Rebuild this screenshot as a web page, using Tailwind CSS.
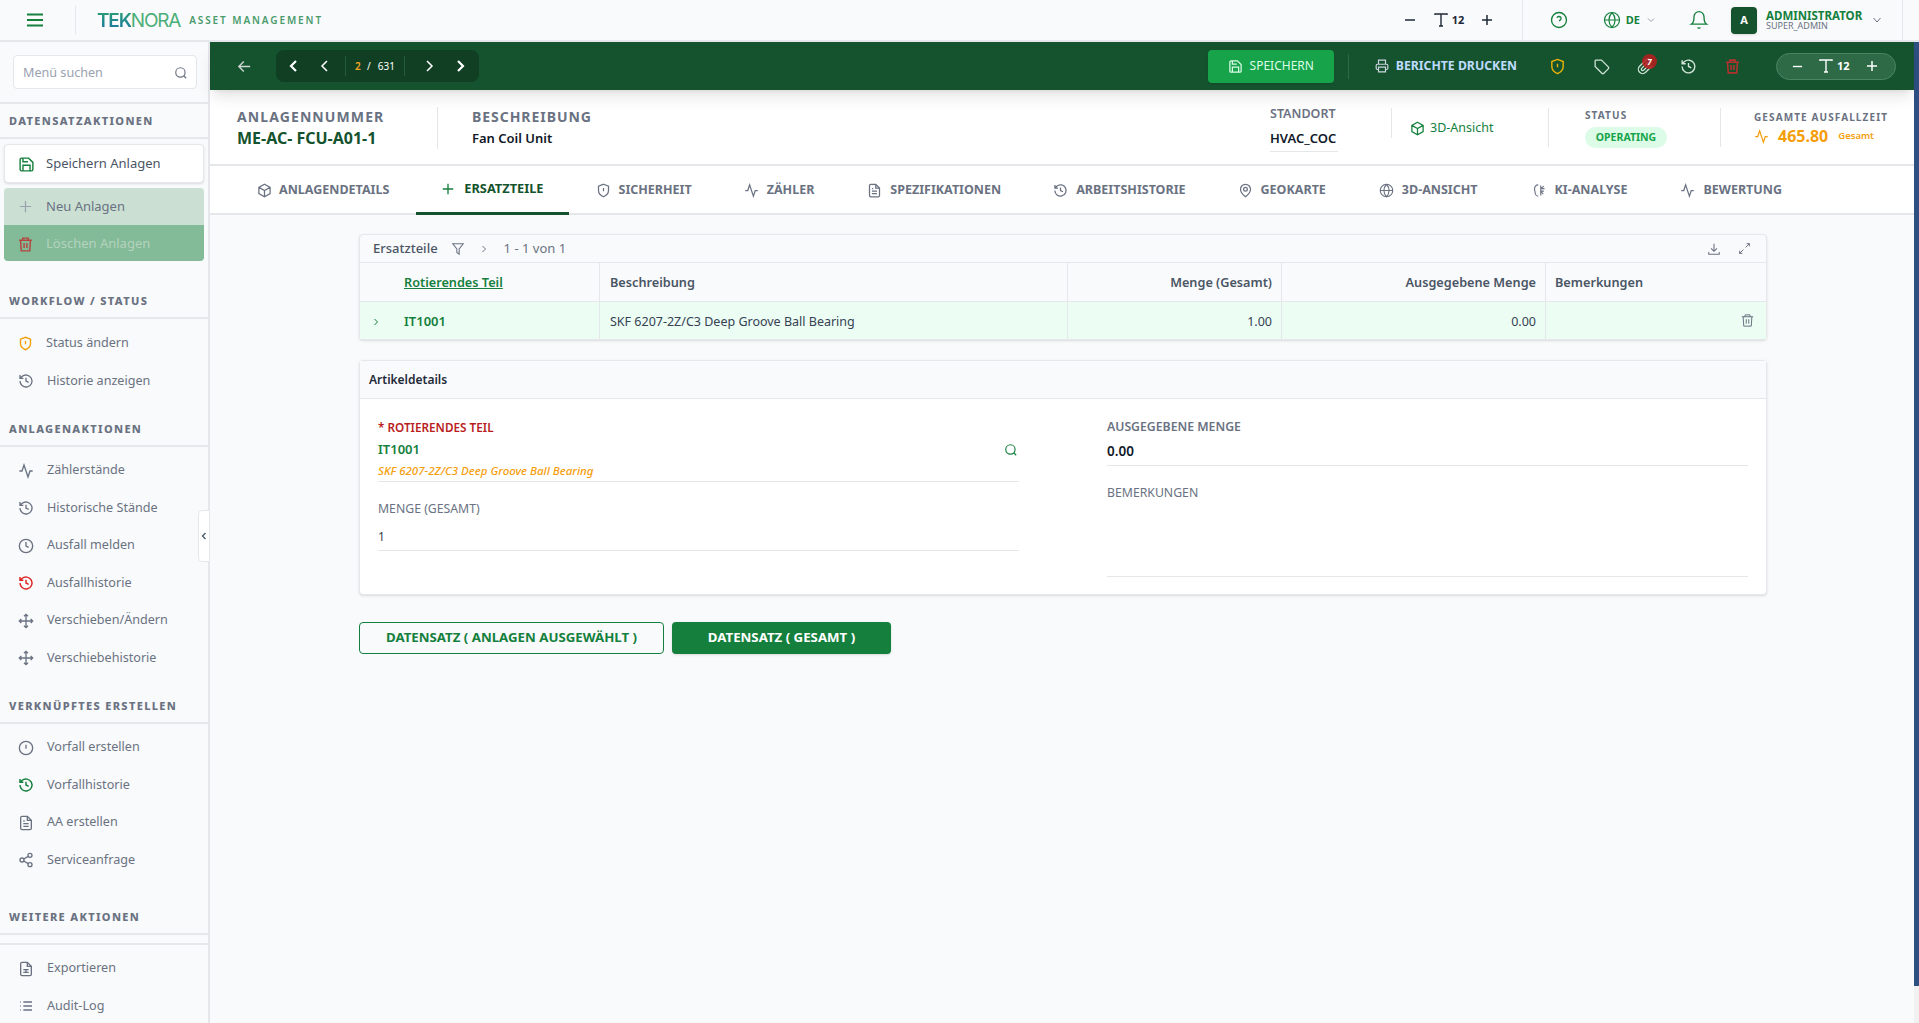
<!DOCTYPE html>
<html lang="de">
<head>
  <meta charset="UTF-8">
  <meta name="viewport" content="width=device-width, initial-scale=1.0">
  <title>Teknora Asset Management</title>
  <script src="https://cdn.jsdelivr.net/npm/@tailwindcss/browser@4"></script>
</head>
<body class="bg-[#f8fafc] h-[1023px] w-[1919px] overflow-hidden flex flex-col font-['Noto_Sans',sans-serif] text-[13px] text-gray-500">

  <!-- top header -->
  <header class="h-[42px] shrink-0 bg-[#f9fafb] border-b-2 border-gray-200 flex items-center pl-[26px]">
    <svg class="w-[18px] h-[18px] text-[#15803d]" viewBox="0 0 18 18" fill="none" stroke="currentColor" stroke-width="2"><path d="M1 3.5h16M1 9h16M1 14.5h16"/></svg>
    <div class="w-px h-[28px] bg-gray-200 ml-[31px]"></div>
    <div class="ml-[21px] flex items-center">
      <span class="text-[19px] leading-none font-['Inter',sans-serif] tracking-[-1.2px]"><span class="bg-gradient-to-b from-[#2fa36b] to-[#1d6fa5] bg-clip-text text-transparent font-semibold">TEK</span><span class="text-[#4caf78]">NORA</span></span>
      <span class="ml-[9px] text-[10px] font-semibold tracking-[1.9px] text-[#4a9a6c]">ASSET MANAGEMENT</span>
    </div>
    <div class="ml-auto flex items-center h-full text-gray-800">
      <svg class="w-[12px] h-[12px]" viewBox="0 0 12 12" stroke="currentColor" stroke-width="1.5"><path d="M1 6h10"/></svg>
      <svg class="w-[16px] h-[16px] ml-[17px]" viewBox="0 0 16 16" fill="none" stroke="currentColor" stroke-width="1.4"><path d="M2 3V2h12v1M8 2v12M6 14h4"/></svg>
      <span class="text-[11px] font-bold ml-[3px] w-[14px]">12</span>
      <svg class="w-[12px] h-[12px] ml-[15px]" viewBox="0 0 12 12" stroke="currentColor" stroke-width="1.5"><path d="M1 6h10M6 1v10"/></svg>
      <div class="w-px h-full bg-gray-200 ml-[29px]"></div>
      <svg class="w-[18px] h-[18px] ml-[27px] text-[#15803d]" viewBox="0 0 24 24" fill="none" stroke="currentColor" stroke-width="1.8"><circle cx="12" cy="12" r="10"/><path d="M9.2 9a3 3 0 0 1 5.7 1c0 2-3 3-3 3M12 17h.01"/></svg>
      <svg class="w-[18px] h-[18px] ml-[35px] text-[#15803d]" viewBox="0 0 24 24" fill="none" stroke="currentColor" stroke-width="1.6"><circle cx="12" cy="12" r="10"/><path d="M2 12h20M12 2c5.500 6 5.500 14 0 20c-5.500-6-5.500-14 0-20"/></svg>
      <span class="text-[11px] font-bold text-[#15803d] ml-[5px]">DE</span>
      <svg class="w-[10px] h-[10px] ml-[6px] text-gray-400" viewBox="0 0 10 10" fill="none" stroke="currentColor" stroke-width="1"><path d="M2 3.500l3 3 3-3"/></svg>
      <svg class="w-[20px] h-[20px] ml-[33px] text-[#15803d]" viewBox="0 0 24 24" fill="none" stroke="currentColor" stroke-width="1.6"><path d="M6 8a6 6 0 0 1 12 0c0 7 3 9 3 9H3s3-2 3-9M10.300 21a2 2 0 0 0 3.400 0"/></svg>
      <div class="w-[26px] h-[27px] ml-[22px] bg-[#14532d] rounded-sm text-white text-[11px] font-bold flex items-center justify-center shadow">A</div>
      <div class="ml-[9px] w-[100px] flex flex-col">
        <span class="text-[11.500px] leading-[10px] font-bold text-[#15803d]">ADMINISTRATOR</span>
        <span class="text-[9px] leading-[9px] text-gray-500">SUPER_ADMIN</span>
      </div>
      <svg class="w-[10px] h-[10px] ml-[6px] text-gray-500" viewBox="0 0 10 10" fill="none" stroke="currentColor" stroke-width="1"><path d="M1.500 3l3.500 4 3.500-4"/></svg>
      <div class="w-px h-full bg-gray-200 ml-[20px]"></div>
      <div class="w-[16px]"></div>
    </div>
  </header>

  <div class="flex-1 flex min-h-0">
    <!-- sidebar -->
    <aside class="relative w-[210px] shrink-0 bg-[#f9fafb] border-r-2 border-gray-200 flex flex-col text-[12.600px]">
      <div class="h-[62px] shrink-0 border-b-2 border-gray-200 pl-[13px] pr-[11px] pt-[13px]">
        <div class="h-[34px] bg-white border border-gray-200 rounded-sm flex items-center justify-between pl-[9px] pr-[8px] pt-[2px] text-gray-400">
          <span>Menü suchen</span>
          <svg class="w-[14px] h-[14px] text-gray-500" viewBox="0 0 24 24" fill="none" stroke="currentColor" stroke-width="2"><circle cx="11" cy="11" r="8"/><path d="M21 21l-4.300-4.300"/></svg>
        </div>
      </div>

      <div class="h-[35px] shrink-0 border-b-2 border-gray-200 pl-[9px] pt-[2px] flex items-center text-[11px] font-extrabold tracking-[1.35px] text-gray-500">DATENSATZAKTIONEN</div>
      <div class="px-[4px] pt-[5px] flex flex-col text-[13px]">
        <div class="h-[39px] pt-[1px] bg-white border border-gray-200 rounded-sm shadow-sm flex items-center pl-[13px] gap-[11px] text-gray-600">
          <svg class="w-[17px] h-[17px] text-[#15803d]" viewBox="0 0 24 24" fill="none" stroke="currentColor" stroke-width="2"><path d="M15 3H5a2 2 0 0 0-2 2v14a2 2 0 0 0 2 2h14a2 2 0 0 0 2-2V9zM7 21v-8h10v8M7 3v5h7"/></svg>
          <span>Speichern Anlagen</span>
        </div>
        <div class="mt-[5px] h-[37px] bg-[#cbe0d3] rounded-t-sm flex items-center pl-[14px] gap-[13px] text-gray-500">
          <svg class="w-[15px] h-[15px] text-gray-400" viewBox="0 0 16 16" stroke="currentColor" stroke-width="1.3"><path d="M2 8h12M8 2v12"/></svg>
          <span>Neu Anlagen</span>
        </div>
        <div class="h-[36px] pt-[2px] bg-[#83ba97] rounded-b-sm flex items-center pl-[13px] gap-[12px] text-[#b4d3bf]">
          <svg class="w-[17px] h-[17px] text-[#b4453f]" viewBox="0 0 24 24" fill="none" stroke="currentColor" stroke-width="2"><path d="M3 6h18M8 6V3h8v3M5 6l1 15h12l1-15M10 10v7M14 10v7"/></svg>
          <span>Löschen Anlagen</span>
        </div>
      </div>

      <div class="mt-[23px] h-[35px] shrink-0 border-b-2 border-gray-200 pl-[9px] pt-[2px] flex items-center text-[11px] font-extrabold tracking-[1.35px] text-gray-500">WORKFLOW / STATUS</div>
      <div class="pt-[6px] flex flex-col">
        <div class="h-[37.5px] flex items-center pl-[18px] gap-[13px] text-gray-500">
          <svg class="w-[15px] h-[15px] text-[#f59e0b]" viewBox="0 0 24 24" fill="none" stroke="currentColor" stroke-width="2.200"><path d="M12 2l8 3v7c0 5-3.500 8-8 10c-4.500-2-8-5-8-10V5zM12 8v5M12 16h.01"/></svg>
          <span>Status ändern</span>
        </div>
        <div class="h-[37.5px] flex items-center pl-[18px] gap-[13px] text-gray-500">
          <svg class="w-[16px] h-[16px] text-gray-500" viewBox="0 0 24 24" fill="none" stroke="currentColor" stroke-width="2"><path d="M3 12a9 9 0 1 0 3-6.700L3 8M3 3v5h5M12 7v5l4 2"/></svg>
          <span>Historie anzeigen</span>
        </div>
      </div>

      <div class="mt-[12px] h-[35px] shrink-0 border-b-2 border-gray-200 pl-[9px] pt-[2px] flex items-center text-[11px] font-extrabold tracking-[1.35px] text-gray-500">ANLAGENAKTIONEN</div>
      <div class="pt-[5px] flex flex-col">
        <div class="h-[37.5px] flex items-center pl-[18px] gap-[13px]">
          <svg class="w-[16px] h-[16px]" viewBox="0 0 24 24" fill="none" stroke="currentColor" stroke-width="2"><path d="M2 12h4l3-9 6 18 3-9h4"/></svg>
          <span>Zählerstände</span>
        </div>
        <div class="h-[37.5px] flex items-center pl-[18px] gap-[13px]">
          <svg class="w-[16px] h-[16px]" viewBox="0 0 24 24" fill="none" stroke="currentColor" stroke-width="2"><path d="M3 12a9 9 0 1 0 3-6.700L3 8M3 3v5h5M12 7v5l4 2"/></svg>
          <span>Historische Stände</span>
        </div>
        <div class="h-[37.5px] flex items-center pl-[18px] gap-[13px]">
          <svg class="w-[16px] h-[16px]" viewBox="0 0 24 24" fill="none" stroke="currentColor" stroke-width="2"><circle cx="12" cy="12" r="10"/><path d="M12 6v6l4 2"/></svg>
          <span>Ausfall melden</span>
        </div>
        <div class="h-[37.5px] flex items-center pl-[18px] gap-[13px]">
          <svg class="w-[16px] h-[16px] text-[#dc2626]" viewBox="0 0 24 24" fill="none" stroke="currentColor" stroke-width="2.200"><path d="M3 12a9 9 0 1 0 3-6.700L3 8M3 3v5h5M12 7v5l4 2"/></svg>
          <span>Ausfallhistorie</span>
        </div>
        <div class="h-[37.5px] flex items-center pl-[18px] gap-[13px]">
          <svg class="w-[16px] h-[16px]" viewBox="0 0 24 24" fill="none" stroke="currentColor" stroke-width="2"><path d="M12 2v20M2 12h20M9 5l3-3 3 3M9 19l3 3 3-3M5 9l-3 3 3 3M19 9l3 3-3 3"/></svg>
          <span>Verschieben/Ändern</span>
        </div>
        <div class="h-[37.5px] flex items-center pl-[18px] gap-[13px]">
          <svg class="w-[16px] h-[16px]" viewBox="0 0 24 24" fill="none" stroke="currentColor" stroke-width="2"><path d="M12 2v20M2 12h20M9 5l3-3 3 3M9 19l3 3 3-3M5 9l-3 3 3 3M19 9l3 3-3 3"/></svg>
          <span>Verschiebehistorie</span>
        </div>
      </div>

      <div class="mt-[12px] h-[35px] shrink-0 border-b-2 border-gray-200 pl-[9px] pt-[2px] flex items-center text-[11px] font-extrabold tracking-[1.35px] text-gray-500">VERKNÜPFTES ERSTELLEN</div>
      <div class="pt-[5px] flex flex-col">
        <div class="h-[37.5px] flex items-center pl-[18px] gap-[13px]">
          <svg class="w-[16px] h-[16px]" viewBox="0 0 24 24" fill="none" stroke="currentColor" stroke-width="2"><circle cx="12" cy="12" r="10"/><path d="M12 7v6M12 16.500h.01"/></svg>
          <span>Vorfall erstellen</span>
        </div>
        <div class="h-[37.5px] flex items-center pl-[18px] gap-[13px]">
          <svg class="w-[16px] h-[16px] text-[#15803d]" viewBox="0 0 24 24" fill="none" stroke="currentColor" stroke-width="2.200"><path d="M3 12a9 9 0 1 0 3-6.700L3 8M3 3v5h5M12 7v5l4 2"/></svg>
          <span>Vorfallhistorie</span>
        </div>
        <div class="h-[37.5px] flex items-center pl-[18px] gap-[13px]">
          <svg class="w-[16px] h-[16px]" viewBox="0 0 24 24" fill="none" stroke="currentColor" stroke-width="2"><path d="M14 2H6a2 2 0 0 0-2 2v16a2 2 0 0 0 2 2h12a2 2 0 0 0 2-2V8zM14 2v6h6M8 13h8M8 17h8M8 9h2"/></svg>
          <span>AA erstellen</span>
        </div>
        <div class="h-[37.5px] flex items-center pl-[18px] gap-[13px]">
          <svg class="w-[16px] h-[16px]" viewBox="0 0 24 24" fill="none" stroke="currentColor" stroke-width="2"><circle cx="18" cy="5" r="3"/><circle cx="6" cy="12" r="3"/><circle cx="18" cy="19" r="3"/><path d="M8.600 13.500l6.800 4M15.400 6.500l-6.800 4"/></svg>
          <span>Serviceanfrage</span>
        </div>
      </div>

      <div class="mt-[21px] h-[35px] shrink-0 border-b-2 border-gray-200 pl-[9px] pt-[2px] flex items-center text-[11px] font-extrabold tracking-[1.35px] text-gray-500">WEITERE AKTIONEN</div>
      <div class="mt-[8px] border-t-2 border-gray-200 pt-[5px] flex flex-col">
        <div class="h-[37.5px] flex items-center pl-[18px] gap-[13px]">
          <svg class="w-[16px] h-[16px]" viewBox="0 0 24 24" fill="none" stroke="currentColor" stroke-width="2"><path d="M14 2H6a2 2 0 0 0-2 2v16a2 2 0 0 0 2 2h12a2 2 0 0 0 2-2V8zM14 2v6h6M8 13h8M8 17h8M12 13v4"/></svg>
          <span>Exportieren</span>
        </div>
        <div class="h-[37.5px] flex items-center pl-[18px] gap-[13px]">
          <svg class="w-[16px] h-[16px]" viewBox="0 0 24 24" fill="none" stroke="currentColor" stroke-width="2"><path d="M8 6h13M8 12h13M8 18h13M3 6h1M3 12h1M3 18h1"/></svg>
          <span>Audit-Log</span>
        </div>
      </div>

      <!-- collapse handle -->
      <div class="absolute right-[-2px] top-[468px] w-[12px] h-[52px] bg-white border border-gray-200 rounded-l-sm flex items-center justify-center text-gray-600">
        <svg class="w-[8px] h-[8px]" viewBox="0 0 8 8" fill="none" stroke="currentColor" stroke-width="1.300"><path d="M5.500 1L2.500 4l3 3"/></svg>
      </div>
    </aside>

    <!-- main column -->
    <main class="flex-1 min-w-0 flex flex-col">
      <!-- action bar -->
      <div class="h-[48px] shrink-0 bg-[#15532f] shadow-lg flex items-center pl-[26px] text-white relative z-10">
        <svg class="w-[17px] h-[17px] text-[#cbd5d0]" viewBox="0 0 24 24" fill="none" stroke="currentColor" stroke-width="2"><path d="M20 12H4M11 5l-7 7 7 7"/></svg>
        <div class="ml-[23px] h-[32px] w-[203px] bg-[#103f24] rounded-lg flex items-center">
          <svg class="w-[14px] h-[14px] ml-[11px]" viewBox="0 0 14 14" fill="none" stroke="currentColor" stroke-width="2.200"><path d="M9 2L4 7l5 5"/></svg>
          <svg class="w-[14px] h-[14px] ml-[17px]" viewBox="0 0 14 14" fill="none" stroke="currentColor" stroke-width="1.500"><path d="M9 2L4 7l5 5"/></svg>
          <div class="w-px h-[20px] bg-[#235c3a] ml-[13px]"></div>
          <span class="ml-[9px] text-[10px] font-semibold text-[#f5a524] w-[10px]">2</span>
          <span class="text-[10px] ml-[2px]">/</span>
          <span class="text-[10px] ml-[7px] w-[18px]">631</span>
          <div class="w-px h-[20px] bg-[#235c3a] ml-[8px]"></div>
          <svg class="w-[14px] h-[14px] ml-[17px]" viewBox="0 0 14 14" fill="none" stroke="currentColor" stroke-width="1.500"><path d="M5 2l5 5-5 5"/></svg>
          <svg class="w-[14px] h-[14px] ml-[17px]" viewBox="0 0 14 14" fill="none" stroke="currentColor" stroke-width="2.200"><path d="M5 2l5 5-5 5"/></svg>
        </div>

        <div class="ml-auto flex items-center">
          <div class="h-[33px] w-[126px] bg-[#16a34a] rounded-sm shadow flex items-center justify-center gap-[7px] text-[12px] text-[#dcfce7]">
            <svg class="w-[15px] h-[15px]" viewBox="0 0 24 24" fill="none" stroke="currentColor" stroke-width="2"><path d="M15 3H5a2 2 0 0 0-2 2v14a2 2 0 0 0 2 2h14a2 2 0 0 0 2-2V9zM7 21v-8h10v8M7 3v5h7"/></svg>
            <span>SPEICHERN</span>
          </div>
          <div class="w-px h-[25px] bg-[#2c6a45] ml-[14px]"></div>
          <svg class="w-[14px] h-[14px] ml-[26px] text-[#cbd5e1]" viewBox="0 0 24 24" fill="none" stroke="currentColor" stroke-width="2"><path d="M6 9V2h12v7M6 18H4a2 2 0 0 1-2-2v-5a2 2 0 0 1 2-2h16a2 2 0 0 1 2 2v5a2 2 0 0 1-2 2h-2M6 14h12v8H6z"/></svg>
          <span class="ml-[7px] text-[12.250px] font-bold text-[#bfdbfe]">BERICHTE DRUCKEN</span>
          <svg class="w-[17px] h-[17px] ml-[32px] text-[#eab308]" viewBox="0 0 24 24" fill="none" stroke="currentColor" stroke-width="2"><path d="M12 2l8 3v7c0 5-3.500 8-8 10c-4.500-2-8-5-8-10V5zM12 8v5M12 16h.01"/></svg>
          <svg class="w-[17px] h-[17px] ml-[27px] text-[#cfe3d6]" viewBox="0 0 24 24" fill="none" stroke="currentColor" stroke-width="1.800"><path d="M3 4v8l9.500 9.500a2 2 0 0 0 2.800 0l6.200-6.200a2 2 0 0 0 0-2.800L12 3H4zM7.500 7.500h.01"/></svg>
          <div class="relative ml-[27px] w-[17px] h-[17px]">
            <svg class="w-[17px] h-[17px] text-[#cfe3d6]" viewBox="0 0 24 24" fill="none" stroke="currentColor" stroke-width="1.800"><path d="M21.400 11l-9.200 9.200a6 6 0 0 1-8.500-8.500l9.200-9.200a4 4 0 0 1 5.700 5.700l-9.200 9.200a2 2 0 0 1-2.800-2.800l8.500-8.500"/></svg>
            <span class="absolute -top-[4px] -right-[3px] w-[15px] h-[15px] rounded-full bg-[#b91c1c]/85 text-[8px] leading-[15px] text-center text-white font-bold italic">7</span>
          </div>
          <svg class="w-[17px] h-[17px] ml-[26px] text-[#d1e5d8]" viewBox="0 0 24 24" fill="none" stroke="currentColor" stroke-width="2"><path d="M3 12a9 9 0 1 0 3-6.700L3 8M3 3v5h5M12 7v5l4 2"/></svg>
          <svg class="w-[17px] h-[17px] ml-[27px] text-[#b3322e]" viewBox="0 0 24 24" fill="none" stroke="currentColor" stroke-width="2.200"><path d="M3 6h18M8 6V3h8v3M5 6l1 15h12l1-15M10 10v7M14 10v7"/></svg>
          <div class="ml-[35px] mr-[18px] w-[120px] h-[27px] rounded-full bg-[#2d6a45] border border-[#4d8463] flex items-center text-white">
            <svg class="w-[11px] h-[11px] ml-[15px]" viewBox="0 0 12 12" stroke="currentColor" stroke-width="1.500"><path d="M1 6h10"/></svg>
            <svg class="w-[16px] h-[16px] ml-[15px]" viewBox="0 0 16 16" fill="none" stroke="currentColor" stroke-width="1.400"><path d="M2 3V2h12v1M8 2v12M6 14h4"/></svg>
            <span class="text-[11px] font-bold ml-[3px] w-[14px]">12</span>
            <svg class="w-[12px] h-[12px] ml-[15px]" viewBox="0 0 12 12" stroke="currentColor" stroke-width="1.500"><path d="M1 6h10M6 1v10"/></svg>
          </div>
        </div>
      </div>

      <!-- asset summary -->
      <div class="h-[76px] shrink-0 bg-white border-b-2 border-gray-200 flex pl-[27px] pr-[26px]">
        <div class="w-[200px] pt-[17px]">
          <div class="text-[14px] leading-[19px] font-bold tracking-[1.1px] text-gray-500">ANLAGENNUMMER</div>
          <div class="mt-[2px] text-[16px] leading-[20px] font-bold text-[#14532d]">ME-AC- FCU-A01-1</div>
        </div>
        <div class="w-px h-[42px] mt-[17px] bg-gray-200"></div>
        <div class="pl-[34px] pt-[17px]">
          <div class="text-[14px] leading-[19px] font-bold tracking-[0.95px] text-gray-500">BESCHREIBUNG</div>
          <div class="mt-[3px] text-[13px] leading-[19px] font-semibold text-gray-900">Fan Coil Unit</div>
        </div>

        <div class="ml-auto flex">
          <div class="w-[68px] pt-[15px]">
            <div class="text-[12.500px] leading-[18px] font-semibold text-gray-500 whitespace-nowrap">STANDORT</div>
            <div class="mt-[6px] pb-[4px] text-[13px] leading-[18px] font-semibold text-gray-900 border-b border-gray-200">HVAC_COC</div>
          </div>
          <div class="w-px h-[30px] mt-[18px] bg-gray-200 ml-[53px]"></div>
          <div class="w-[156px] pt-[28px] pl-[18px] h-[60px] flex gap-[5px] text-[#15803d] text-[12.500px] leading-[20px]">
            <svg class="w-[15px] h-[15px] mt-[3px]" viewBox="0 0 24 24" fill="none" stroke="currentColor" stroke-width="2"><path d="M12 2l9 5v10l-9 5-9-5V7zM3 7l9 5 9-5M12 12v10"/></svg>
            <span>3D-Ansicht</span>
          </div>
          <div class="w-px h-[39px] mt-[18px] bg-gray-200"></div>
          <div class="w-[171px] pl-[36px] pt-[17px]">
            <div class="text-[10px] leading-[16px] font-bold tracking-[1.1px] text-gray-500">STATUS</div>
            <div class="mt-[4px] w-[82px] h-[21px] rounded-full bg-[#dcfce7] text-[#16a34a] text-[10.500px] font-bold flex items-center justify-center">OPERATING</div>
          </div>
          <div class="w-px h-[39px] mt-[18px] bg-gray-200"></div>
          <div class="pl-[33px] pt-[19px]">
            <div class="text-[10px] leading-[16px] font-bold tracking-[1.1px] text-gray-500 whitespace-nowrap">GESAMTE AUSFALLZEIT</div>
            <div class="mt-[1px] flex items-center text-[#f59e0b]">
              <svg class="w-[15px] h-[15px]" viewBox="0 0 24 24" fill="none" stroke="currentColor" stroke-width="2"><path d="M2 12h4l3-9 6 18 3-9h4"/></svg>
              <span class="ml-[9px] text-[16px] leading-[20px] font-bold">465.80</span>
              <span class="ml-[10px] text-[9.500px] font-semibold">Gesamt</span>
            </div>
          </div>
        </div>
      </div>

      <!-- tabs -->
      <div class="h-[49px] shrink-0 bg-white border-b-2 border-gray-200 flex pl-[21px] text-[12.500px] font-bold text-gray-500">
        <div class="flex items-center pl-[26px] pr-[27px] pt-[2px] gap-[7px]">
          <svg class="w-[15px] h-[15px]" viewBox="0 0 24 24" fill="none" stroke="currentColor" stroke-width="2"><path d="M12 2l9 5v10l-9 5-9-5V7zM3 7l9 5 9-5M12 12v10"/></svg>
          <span>ANLAGENDETAILS</span>
        </div>
        <div class="flex items-center px-[25px] gap-[9px] text-[12.800px] text-[#14532d] border-b-[3px] border-[#14532d] -mb-[2px]">
          <svg class="w-[14px] h-[14px] text-[#15803d]" viewBox="0 0 16 16" stroke="currentColor" stroke-width="1.500"><path d="M2 8h12M8 2v12"/></svg>
          <span>ERSATZTEILE</span>
        </div>
        <div class="flex items-center ml-[1px] px-[26px] pt-[2px] gap-[8px]">
          <svg class="w-[15px] h-[15px]" viewBox="0 0 24 24" fill="none" stroke="currentColor" stroke-width="2"><path d="M12 2l8 3v7c0 5-3.500 8-8 10c-4.500-2-8-5-8-10V5zM12 8v5M12 16h.01"/></svg>
          <span>SICHERHEIT</span>
        </div>
        <div class="flex items-center px-[26px] pt-[2px] gap-[8px]">
          <svg class="w-[15px] h-[15px]" viewBox="0 0 24 24" fill="none" stroke="currentColor" stroke-width="2"><path d="M2 12h4l3-9 6 18 3-9h4"/></svg>
          <span>ZÄHLER</span>
        </div>
        <div class="flex items-center ml-[1px] px-[26px] pt-[2px] gap-[8px]">
          <svg class="w-[15px] h-[15px]" viewBox="0 0 24 24" fill="none" stroke="currentColor" stroke-width="2"><path d="M14 2H6a2 2 0 0 0-2 2v16a2 2 0 0 0 2 2h12a2 2 0 0 0 2-2V8zM14 2v6h6M8 13h8M8 17h8M8 9h2"/></svg>
          <span>SPEZIFIKATIONEN</span>
        </div>
        <div class="flex items-center px-[26px] pt-[2px] gap-[8px]">
          <svg class="w-[15px] h-[15px]" viewBox="0 0 24 24" fill="none" stroke="currentColor" stroke-width="2"><path d="M3 12a9 9 0 1 0 3-6.700L3 8M3 3v5h5M12 7v5l4 2"/></svg>
          <span>ARBEITSHISTORIE</span>
        </div>
        <div class="flex items-center px-[26px] pt-[2px] gap-[8px]">
          <svg class="w-[15px] h-[15px]" viewBox="0 0 24 24" fill="none" stroke="currentColor" stroke-width="2"><path d="M20 10c0 6-8 12-8 12s-8-6-8-12a8 8 0 0 1 16 0z"/><circle cx="12" cy="10" r="3"/></svg>
          <span>GEOKARTE</span>
        </div>
        <div class="flex items-center ml-[1px] px-[26px] pt-[2px] gap-[8px]">
          <svg class="w-[15px] h-[15px]" viewBox="0 0 24 24" fill="none" stroke="currentColor" stroke-width="1.800"><circle cx="12" cy="12" r="10"/><path d="M2 12h20M12 2c5.500 6 5.500 14 0 20c-5.500-6-5.500-14 0-20"/></svg>
          <span>3D-ANSICHT</span>
        </div>
        <div class="flex items-center ml-[2px] px-[26px] pt-[2px] gap-[8px]">
          <svg class="w-[15px] h-[15px]" viewBox="0 0 24 24" fill="none" stroke="currentColor" stroke-width="1.800"><path d="M10 3C6 3 4 6 4 10c0 2 1 3 1 5c0 3 2 6 5 6M14 4v16M14 9l5-4M14 9h6M14 13h5M14 13l4 5"/></svg>
          <span>KI-ANALYSE</span>
        </div>
        <div class="flex items-center ml-[1px] px-[26px] pt-[2px] gap-[8px]">
          <svg class="w-[15px] h-[15px]" viewBox="0 0 24 24" fill="none" stroke="currentColor" stroke-width="2"><path d="M2 12h4l3-9 6 18 3-9h4"/></svg>
          <span>BEWERTUNG</span>
        </div>
      </div>

      <!-- content -->
      <div class="flex-1 pl-[149px] pr-[147px] pt-[19px]">
        <!-- table card -->
        <div class="border border-gray-200 rounded-sm shadow-sm bg-[#f9fafb]">
          <div class="h-[28px] border-b border-gray-200 flex items-center pl-[13px] pr-[15px]">
            <span class="text-[13px] font-medium text-gray-600">Ersatzteile</span>
            <svg class="w-[14px] h-[14px] ml-[13px] text-gray-500" viewBox="0 0 24 24" fill="none" stroke="currentColor" stroke-width="1.800"><path d="M3 3h18l-7 9v9l-4-3v-6z"/></svg>
            <svg class="w-[8px] h-[8px] ml-[15px] text-gray-500" viewBox="0 0 8 8" fill="none" stroke="currentColor" stroke-width="1"><path d="M2.500 1l3 3-3 3"/></svg>
            <span class="ml-[16px] text-[13px] text-gray-500">1 - 1 von 1</span>
            <svg class="w-[14px] h-[14px] ml-auto text-gray-500" viewBox="0 0 24 24" fill="none" stroke="currentColor" stroke-width="1.800"><path d="M12 3v13M7 11l5 5 5-5M3 17v4h18v-4"/></svg>
            <svg class="w-[13px] h-[13px] ml-[17px] text-gray-500" viewBox="0 0 24 24" fill="none" stroke="currentColor" stroke-width="1.800"><path d="M14 10l7-7M16 3h5v5M10 14l-7 7M3 16v5h5"/></svg>
          </div>
          <div class="grid grid-cols-[240px_468px_214px_264px_1fr] h-[39px] border-b border-gray-200 text-[12.700px] font-semibold text-gray-600">
            <div class="border-r border-gray-200 pl-[44px] pt-[2px] flex items-center text-[#15803d] underline">Rotierendes Teil</div>
            <div class="border-r border-gray-200 pl-[10px] pt-[2px] flex items-center">Beschreibung</div>
            <div class="border-r border-gray-200 pr-[9px] pt-[2px] flex items-center justify-end">Menge (Gesamt)</div>
            <div class="border-r border-gray-200 pr-[9px] pt-[2px] flex items-center justify-end">Ausgegebene Menge</div>
            <div class="pl-[9px] pt-[2px] flex items-center">Bemerkungen</div>
          </div>
          <div class="grid grid-cols-[240px_468px_214px_264px_1fr] h-[37px] bg-[#ecfdf3] text-[12.500px] text-gray-700">
            <div class="border-r border-gray-200 flex items-center pl-[12px] pt-[3px]">
              <svg class="w-[8px] h-[8px] text-[#15803d]" viewBox="0 0 8 8" fill="none" stroke="currentColor" stroke-width="1"><path d="M2.500 1l3 3-3 3"/></svg>
              <span class="ml-[24px] text-[13px] font-semibold text-[#15803d]">IT1001</span>
            </div>
            <div class="border-r border-gray-200 pl-[10px] pt-[3px] flex items-center">SKF 6207-2Z/C3 Deep Groove Ball Bearing</div>
            <div class="border-r border-gray-200 pr-[9px] pt-[3px] flex items-center justify-end">1.00</div>
            <div class="border-r border-gray-200 pr-[9px] pt-[3px] flex items-center justify-end">0.00</div>
            <div class="flex items-center justify-end pr-[11px]">
              <svg class="w-[15px] h-[15px] text-gray-500" viewBox="0 0 24 24" fill="none" stroke="currentColor" stroke-width="1.600"><path d="M3 6h18M8 6V3h8v3M5 6l1 15h12l1-15M10 10v7M14 10v7"/></svg>
            </div>
          </div>
        </div>

        <!-- item details -->
        <div class="mt-[20px] h-[235px] border border-gray-200 rounded-sm shadow-sm bg-white">
          <div class="h-[38px] border-b border-gray-200 bg-[#f9fafb] flex items-center pl-[9px] text-[12px] font-semibold text-gray-800">Artikeldetails</div>
          <div class="grid grid-cols-2 gap-x-[88px] pl-[18px] pr-[18px] pt-[19px]">
            <div>
              <div class="text-[11.750px] leading-[18px] font-semibold text-[#b91c1c]">* ROTIERENDES TEIL</div>
              <div class="mt-[5px] flex items-center justify-between pr-[1px] h-[18px]">
                <span class="text-[13px] font-semibold text-[#15803d]">IT1001</span>
                <svg class="w-[14px] h-[14px] text-[#15803d]" viewBox="0 0 24 24" fill="none" stroke="currentColor" stroke-width="2"><circle cx="11" cy="11" r="8"/><path d="M21 21l-4.300-4.300"/></svg>
              </div>
              <div class="mt-[4px] pb-[2px] border-b border-gray-200 text-[11.500px] leading-[16px] italic font-medium text-[#f59e0b]">SKF 6207-2Z/C3 Deep Groove Ball Bearing</div>
              <div class="mt-[18px] text-[12.250px] leading-[18px] text-gray-500">MENGE (GESAMT)</div>
              <div class="mt-[10px] h-[23px] border-b border-gray-200 text-[12px] leading-[18px] text-gray-700">1</div>
            </div>
            <div>
              <div class="text-[12.250px] leading-[18px] font-semibold text-gray-500">AUSGEGEBENE MENGE</div>
              <div class="mt-[6px] h-[24px] border-b border-gray-200 text-[13.500px] leading-[18px] font-semibold text-gray-900">0.00</div>
              <div class="mt-[18px] h-[93px] border-b border-gray-200 text-[12.250px] leading-[18px] text-gray-500">BEMERKUNGEN</div>
            </div>
          </div>
        </div>

        <!-- buttons -->
        <div class="mt-[27px] flex gap-[8px] text-[13.250px] font-bold">
          <div class="w-[305px] h-[32px] border border-[#15803d] rounded-sm text-[#15803d] flex items-center justify-center">DATENSATZ ( ANLAGEN AUSGEWÄHLT )</div>
          <div class="w-[219px] h-[32px] bg-[#15803d] rounded-sm shadow text-white flex items-center justify-center">DATENSATZ ( GESAMT )</div>
        </div>
      </div>
    </main>

    <!-- page scrollbar -->
    <div class="w-[5px] shrink-0 flex flex-col bg-[#f1f1f1]">
      <div class="h-[944px] bg-[#2e4f82]"></div>
    </div>
  </div>
</body>
</html>
